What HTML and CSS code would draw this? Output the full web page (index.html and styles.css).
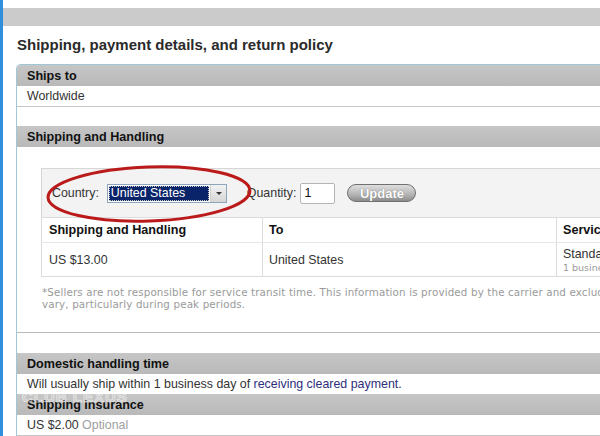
FILE: index.html
```html
<!DOCTYPE html>
<html lang="en">
<head>
  <meta charset="UTF-8">
  <title>Shipping, payment details, and return policy</title>
  <link rel="stylesheet" href="styles.css">
</head>
<body>
  <div class="window">
    <div class="topbar"></div>
    <h1 class="title">Shipping, payment details, and return policy</h1>

    <div class="panel">
      <div class="sec-head first">Ships to</div>
      <div class="sec-row line">Worldwide</div>

      <div class="sec-head gap">Shipping and Handling</div>
      <div class="calc">
        <div class="calc-form">
          <span class="label">Country:</span>
          <div class="select">
            <span class="select-value">United States</span>
            <span class="select-arrow"></span>
          </div>
          <span class="label qty-label">Quantity:</span>
          <div class="qty">1</div>
          <button class="update">Update</button>
        </div>

        <table class="rates">
          <tr>
            <th class="col-cost">Shipping and Handling</th>
            <th class="col-to">To</th>
            <th>Service</th>
          </tr>
          <tr>
            <td>US $13.00</td>
            <td>United States</td>
            <td>
              <div>Standard Shipping</div>
              <div class="small">1 business day</div>
            </td>
          </tr>
        </table>

        <p class="note">*Sellers are not responsible for service transit time. This information is provided by the carrier and excludes weekends and holidays. Delivery times may<br>vary, particularly during peak periods.</p>

        <!-- red marker drawn over the country picker -->
        <svg class="marker" width="214" height="66" viewBox="0 0 214 66">
          <ellipse cx="105" cy="33" rx="101" ry="27" fill="none" stroke="#bb1a1a" stroke-width="3" transform="rotate(-2 105 33)"/>
        </svg>
      </div>

      <div class="sec-head gap2">Domestic handling time</div>
      <div class="sec-row">Will usually ship within 1 business day of <a href="#">receiving cleared payment.</a></div>
      <div class="sec-head">Shipping insurance</div>
      <div class="sec-row line">US $2.00 <span class="muted">Optional</span></div>

      <div class="watermark" aria-hidden="true">CLUB LEXUS</div>
    </div>
  </div>
</body>
</html>
```

FILE: styles.css
```css
body {
  margin: 0;
  overflow: hidden;
  background: #fff;
  font-family: Arial, "Liberation Sans", sans-serif;
}

.window {
  border-left: 3px solid #2f8fdc;
  height: 436px;
  width: 900px;
  padding-top: 8px;
  box-sizing: border-box;
}

.topbar {
  height: 18px;
  background: #cbcbcb;
}

.title {
  margin: 10px 0 10px 14px;
  font-size: 15px;
  line-height: 18px;
  font-weight: bold;
  color: #2a2a2a;
}

.panel {
  position: relative;
  margin-left: 13px;
  width: 800px;
  border: 1px solid #9ec8d8;
  border-right: none;
  border-bottom: none;
  border-radius: 5px 0 0 0;
}

.sec-head {
  height: 21px;
  line-height: 22px;
  padding-left: 10px;
  background: linear-gradient(#c6c6c6, #b9b9b9);
  font-size: 12.6px;
  font-weight: bold;
  color: #111;
}

.sec-head.first {
  border-radius: 4px 0 0 0;
}

.sec-head.gap {
  margin-top: 19px;
}

.sec-head.gap2 {
  margin-top: 20px;
}

.sec-row {
  height: 20px;
  line-height: 20px;
  padding-left: 10px;
  font-size: 12.4px;
  color: #333;
}

.sec-row.line {
  border-bottom: 1px solid #c6c6c6;
}

.sec-row a {
  color: #2e2e7c;
  text-decoration: none;
}

.muted {
  color: #a0a0a0;
}

.calc {
  position: relative;
  padding: 21px 0 22px 24px;
  border-bottom: 1px solid #bcbcbc;
}

.calc-form {
  display: flex;
  align-items: center;
  width: 640px;
  height: 48px;
  padding-left: 10px;
  background: #f3f3f3;
  border: 1px solid #d6d6d6;
  border-bottom: none;
}

.label {
  font-size: 12.4px;
  color: #333;
}

.select {
  display: flex;
  width: 120px;
  height: 19px;
  margin-left: 8px;
  box-sizing: border-box;
  border: 1px solid #8fa5bb;
  background: #fff;
}

.select-value {
  flex: 1;
  margin: 1px;
  padding-left: 2px;
  background: #0a246a;
  outline: 1px dotted #c8c8c8;
  outline-offset: -1px;
  color: #fff;
  font-size: 12.4px;
  line-height: 15px;
}

.select-arrow {
  position: relative;
  width: 15px;
  background: linear-gradient(#f2f2f2, #d6d6d6);
  border-left: 1px solid #cfcfcf;
}

.select-arrow::after {
  content: "";
  position: absolute;
  left: 5px;
  top: 7px;
  border-left: 3px solid transparent;
  border-right: 3px solid transparent;
  border-top: 3px solid #333;
}

.qty-label {
  margin-left: 20px;
}

.qty {
  width: 35px;
  height: 21px;
  margin-left: 4px;
  box-sizing: border-box;
  padding-left: 3px;
  border: 1px solid #b5b5b5;
  border-radius: 2px;
  background: #fff;
  font-size: 12.4px;
  line-height: 19px;
  color: #111;
}

.update {
  width: 69px;
  height: 18px;
  margin-left: 12px;
  padding: 0;
  border: 1px solid #707070;
  border-radius: 9px;
  background: linear-gradient(#dedede, #b8b8b8 55%, #8c8c8c);
  color: #fff;
  font-family: Arial, "Liberation Sans", sans-serif;
  font-size: 13px;
  font-weight: bold;
  text-shadow: 0 0 1px #666;
}

.rates {
  width: 651px;
  border-collapse: collapse;
  background: #fff;
  border: 1px solid #dcdcdc;
  font-size: 12.4px;
  color: #333;
}

.rates th {
  height: 24px;
  padding: 0 7px;
  text-align: left;
  font-size: 12.6px;
  color: #111;
  border-bottom: 1px solid #e6e6e6;
}

.rates td {
  height: 33px;
  padding: 0 7px;
}

.rates th + th,
.rates td + td {
  border-left: 1px solid #dcdcdc;
  padding-left: 6px;
}

.rates .col-cost {
  width: 206px;
}

.rates .col-to {
  width: 280px;
}

.rates .small {
  margin-top: 1px;
  font-family: "DejaVu Sans", Verdana, sans-serif;
  font-size: 9.5px;
  color: #999;
}

.note {
  margin: 9px 0 0 1px;
  font-family: "DejaVu Sans", Verdana, sans-serif;
  font-size: 10.3px;
  line-height: 12px;
  letter-spacing: 0.15px;
  color: #9a9a9a;
  white-space: nowrap;
}

.marker {
  position: absolute;
  left: 27px;
  top: 14px;
}

.watermark {
  position: absolute;
  left: 5px;
  top: 323px;
  font-size: 15px;
  font-weight: bold;
  letter-spacing: 1px;
  color: transparent;
  -webkit-text-stroke: 1px rgba(255, 255, 255, 0.55);
}
```
